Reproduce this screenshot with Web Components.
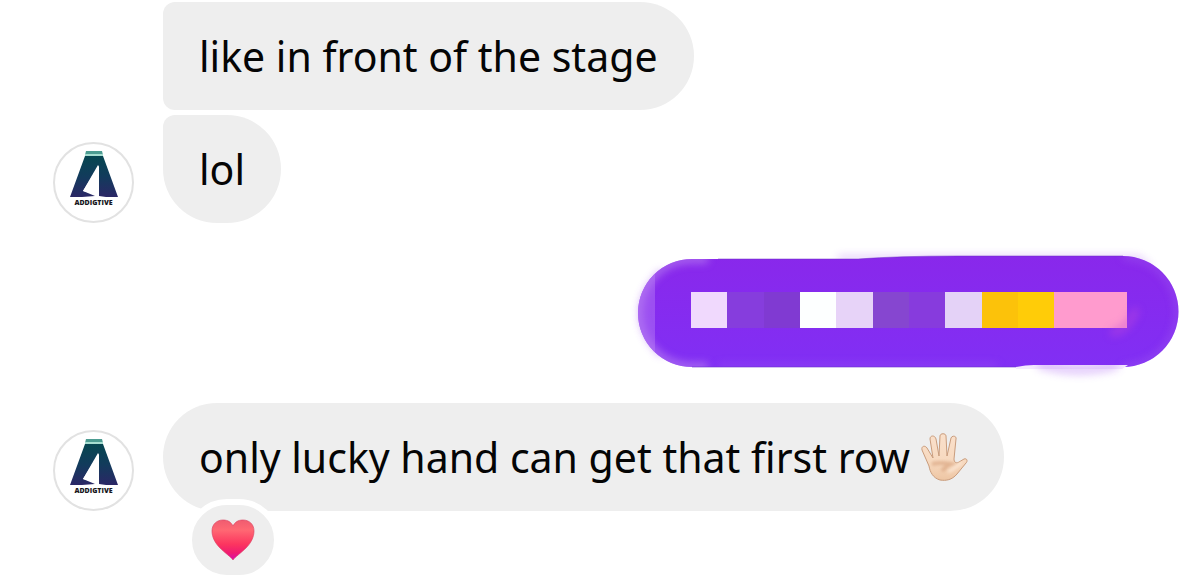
<!DOCTYPE html>
<html lang="en">
<head>
<meta charset="utf-8">
<meta name="viewport" content="width=device-width, initial-scale=1">
<title>Chat</title>
<style>
  body { margin: 0; background: #fff; color: #050505; font-family: "Noto Sans", sans-serif; font-size: 41px; line-height: 56px; font-variant-ligatures: none; }
</style>
</head>
<body>
<chat-thread>
  <message-group>
    <brand-avatar slot="avatar"></brand-avatar>
    <chat-bubble position="first">like in front of the stage</chat-bubble>
    <chat-bubble position="last">lol</chat-bubble>
  </message-group>
  <masked-message></masked-message>
  <message-group>
    <brand-avatar slot="avatar"></brand-avatar>
    <chat-bubble>only lucky hand can get that first row <hand-emoji></hand-emoji></chat-bubble>
    <heart-reaction slot="reaction"></heart-reaction>
  </message-group>
</chat-thread>
<script>
const define = (name, html) => customElements.define(name, class extends HTMLElement {
  constructor() {
    super();
    this.attachShadow({ mode: "open" }).innerHTML = html;
  }
});

define("chat-thread", `
<style>
  :host { display: flex; flex-direction: column; gap: 36px; padding: 2px 23px 8px 53px; }
</style>
<slot></slot>`);

define("message-group", `
<style>
  :host { display: grid; grid-template-columns: 81px minmax(0, 1fr); column-gap: 29px; }
  .avatar { align-self: end; display: flex; }
  .stack { display: flex; flex-direction: column; align-items: flex-start; gap: 5px; }
  .reaction { grid-column: 2; display: flex; padding-left: 23px; }
</style>
<div class="avatar"><slot name="avatar"></slot></div>
<div class="stack"><slot></slot></div>
<div class="reaction"><slot name="reaction"></slot></div>`);

define("chat-bubble", `
<style>
  :host { display: block; box-sizing: border-box; padding: 26px 36px; border-radius: 54px; background: #eee; }
  :host([position="first"]) { border-radius: 12px 54px 54px 12px; }
  :host([position="last"]) { border-radius: 12px 54px 54px 54px; }
</style>
<slot></slot>`);

define("brand-avatar", `
<style>
  :host { display: grid; justify-items: center; align-content: start; box-sizing: border-box; width: 81px; height: 81px; padding-top: 7px; border: 2px solid #e2e2e2; border-radius: 50%; background: #fff; }
  svg { display: block; width: 50px; height: 46px; }
  span { font: 800 7px/10px "Open Sans", sans-serif; color: #17171c; margin-top: 1px; }
</style>
<svg viewBox="0 0 50 46" aria-hidden="true">
  <defs><linearGradient id="g" x1="0" y1="0" x2="0" y2="1"><stop offset="0" stop-color="#064650"/><stop offset=".5" stop-color="#123b5c"/><stop offset="1" stop-color="#2b2766"/></linearGradient></defs>
  <path fill="#4c9c91" d="M17 0H33L34 4H16Z"/>
  <path fill="#a6ddd0" d="M16 3H34V5H16Z"/>
  <path fill="url(#g)" d="M16 5H34L49 46H37L30 45V14L14 40L26 45L13 46H1Z"/>
  <path fill="#fff" d="M29 14V44L14 40Z"/>
</svg>
<span>ADDIGTIVE</span>`);

define("hand-emoji", `
<style>
  :host { display: inline-block; width: 47px; height: 49px; vertical-align: -9px; }
  svg { display: block; }
</style>
<svg width="47" height="49" viewBox="0 0 47 49" role="img" aria-label="Raised hand with fingers splayed">
  <defs>
    <linearGradient id="s" x1="0" y1="0" x2="0" y2="1"><stop offset="0" stop-color="#fae0cb"/><stop offset=".6" stop-color="#f7d9bf"/><stop offset="1" stop-color="#edc5a3"/></linearGradient>
    <filter id="f" x="-50%" y="-50%" width="200%" height="200%"><feGaussianBlur stdDeviation="1.8"/></filter>
  </defs>
  <path fill="url(#s)" stroke="#c99c7c" stroke-width="1" d="M8 33L1 17C0 13 4 12 6 15L12 25L9 6C9 2 14 2 15 6L18 23L19 3C19 0 25 0 25 3L26 23L30 5C31 2 36 3 35 6L33 26C33 29 35 31 38 29L43 26C46 25 47 28 45 30L36 41C31 47 25 48 19 47C12 45 9 39 8 33Z"/>
  <path fill="none" stroke="#d59f79" stroke-width="4" opacity=".6" filter="url(#f)" d="M11 31Q19 29 30 31Q25 33 21 38"/>
  <path fill="none" stroke="#fff1e3" stroke-width="3" opacity=".6" filter="url(#f)" d="M27 39Q33 36 40 30"/>
</svg>`);

define("heart-reaction", `
<style>
  :host { position: relative; display: flex; justify-content: center; align-items: center; box-sizing: border-box; width: 94px; height: 82px; margin-top: -12px; border: 6px solid #fff; border-radius: 47px; background: #eee; }
  svg { display: block; }
</style>
<svg width="44" height="42" viewBox="0 0 44 42" role="img" aria-label="Heart">
  <defs>
    <linearGradient id="h" x1="0" y1="0" x2="0" y2="1"><stop offset="0" stop-color="#f05c70"/><stop offset=".25" stop-color="#ff6873"/><stop offset=".6" stop-color="#fc365f"/><stop offset=".82" stop-color="#f01c70"/><stop offset="1" stop-color="#d80bb0"/></linearGradient>
  </defs>
  <path fill="url(#h)" stroke="#dc4261" stroke-opacity=".65" d="M22 41C20 38 14 34 9 29C4 24 1 18 1 12C1 5 6 1 12 1C17 1 20 3 22 7C24 3 27 1 32 1C38 1 43 5 43 12C43 18 40 24 35 29C30 34 24 38 22 41Z"/>
</svg>`);

const tones = ["#f0d9fd", "#863ddd", "#803ad2", "#fdffff", "#e7d3f8", "#8646d0", "#873bdd", "#e4d2f7", "#fcc20a", "#ffcc08", "#ff9bce", "#ff9bce"];
define("masked-message", `
<style>
  :host { position: relative; display: block; align-self: flex-end; box-sizing: border-box; width: 539px; padding: 33px 50px 39px 53px; }
  .paint { position: absolute; inset: 0; display: block; overflow: visible; }
  .mosaic { position: relative; display: grid; grid-template-columns: repeat(12, 1fr); height: 36px; }
  .glow { position: absolute; inset: 0; overflow: visible; pointer-events: none; }
</style>
<svg class="paint" width="539" height="108" viewBox="0 0 539 108" aria-hidden="true">
  <defs>
    <linearGradient id="p" x1="0" y1="0" x2="0" y2="1"><stop offset="0" stop-color="#8928eb"/><stop offset="1" stop-color="#812ff4"/></linearGradient>
    <filter id="b" filterUnits="userSpaceOnUse" x="-40" y="-40" width="620" height="190"><feGaussianBlur stdDeviation="4"/></filter>
    <clipPath id="c"><path d="M54 0H220Q260 -3 320 -3H485A54 54 0 0 1 485 108H54A54 54 0 0 1 54 0Z"/></clipPath>
    <clipPath id="u"><path d="M360 106H520V140H360Z"/></clipPath>
  </defs>
  <path d="M26 14Q-14 54 26 94" fill="none" stroke="#a457f2" stroke-width="9" opacity=".6" filter="url(#b)"/>
  <path d="M200 -1H500L512 8" fill="none" stroke="#a960f1" stroke-width="4" opacity=".45" filter="url(#b)"/>
  <path d="M54 0H220Q260 -3 320 -3H485A54 54 0 0 1 485 108H54A54 54 0 0 1 54 0Z" fill="url(#p)"/>
  <g clip-path="url(#c)">
    <path d="M70 0H54A54 54 0 0 0 54 108H70" fill="none" stroke="#b880f0" stroke-width="8" opacity=".75" filter="url(#b)"/>
    <path d="M17 10H0V97H17Z" fill="#bd88f5" opacity=".4"/>
    <path d="M80 107H360" stroke="#a460f4" stroke-width="4" opacity=".5" filter="url(#b)"/>
    <path d="M485 -2A54 54 0 0 1 485 108" fill="none" stroke="#a05bee" stroke-width="5" opacity=".6" filter="url(#b)"/>
  </g>
  <path d="M80 0H220Q260 -3 320 -3H485" fill="none" stroke="#6b2bc4" stroke-width="1" opacity=".5"/>
  <path d="M54 108H390" stroke="#6933c9" stroke-width="1" opacity=".6"/>
  <path d="M378 108Q388 106 396 106H490L484 110H378Z" fill="#f4eafe"/>
  <g clip-path="url(#u)"><path d="M400 105Q440 117 480 106" fill="none" stroke="#b678f5" stroke-width="8" opacity=".45" filter="url(#b)"/></g>
</svg>
<div class="mosaic">${tones.map(c => `<i style="background:${c}"></i>`).join("")}</div>
<svg class="glow" width="539" height="108" viewBox="0 0 539 108" aria-hidden="true">
  <defs><filter id="q" filterUnits="userSpaceOnUse" x="430" y="10" width="109" height="98"><feGaussianBlur stdDeviation="4"/></filter></defs>
  <path d="M473 74Q491 71 498 50" fill="none" stroke="#c44bd9" stroke-width="7" opacity=".5" filter="url(#q)"/>
</svg>`);
</script>
</body>
</html>
